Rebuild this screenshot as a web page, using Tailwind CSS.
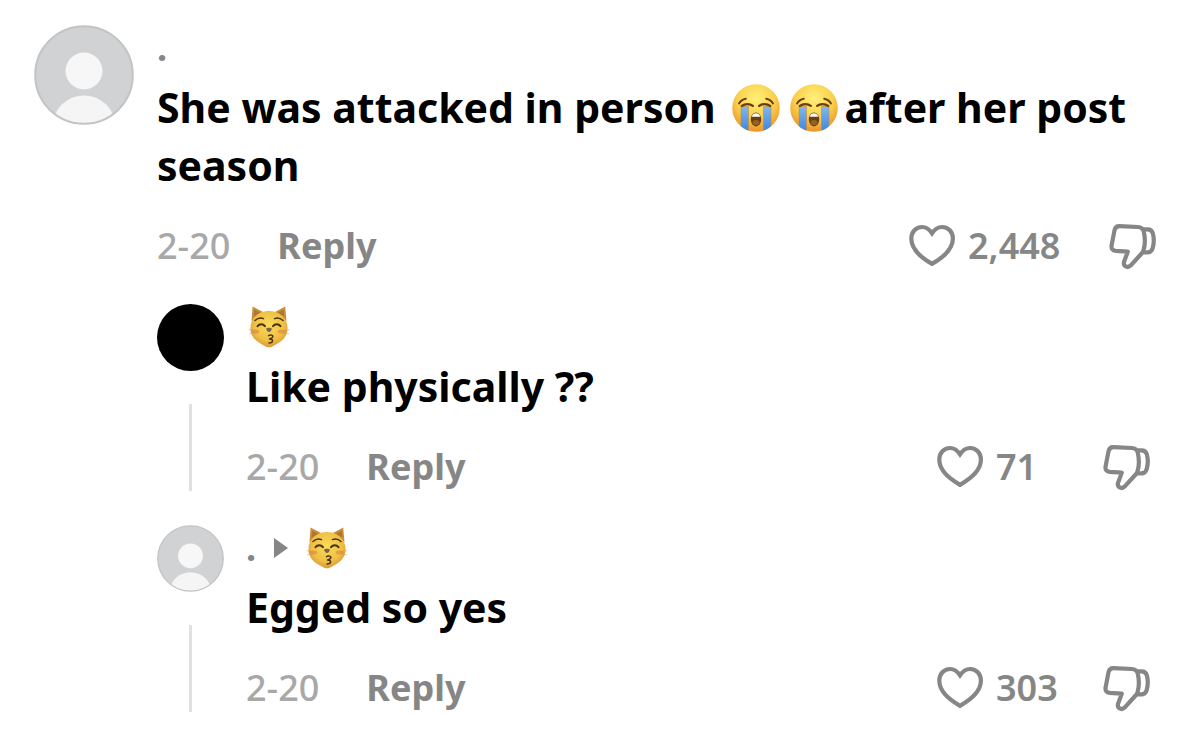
<!DOCTYPE html>
<html lang="en">
<head>
    <meta charset="UTF-8">
    <meta name="viewport" content="width=device-width, initial-scale=1.0">
    <title>Comments</title>
    <script src="https://cdn.jsdelivr.net/npm/@tailwindcss/browser@4"></script>
</head>
<body class="bg-white font-['Noto_Sans',sans-serif] text-black">
    <!-- Shared icons -->
    <svg class="absolute size-0" aria-hidden="true">
        <defs>
            <radialGradient id="face" cx="50%" cy="30%" r="72%">
                <stop offset="0" stop-color="#fff07a"/>
                <stop offset="0.55" stop-color="#fad04c"/>
                <stop offset="1" stop-color="#e88f2a"/>
            </radialGradient>
            <linearGradient id="tear" x1="0" y1="0" x2="0" y2="1">
                <stop offset="0" stop-color="#80b8ef"/>
                <stop offset="1" stop-color="#3f86e0"/>
            </linearGradient>
            <radialGradient id="fur" cx="50%" cy="40%" r="62%">
                <stop offset="0" stop-color="#f8dc5a"/>
                <stop offset="0.65" stop-color="#efc044"/>
                <stop offset="1" stop-color="#d89636"/>
            </radialGradient>
            <clipPath id="round"><circle cx="50" cy="50" r="49"/></clipPath>
            <clipPath id="head"><circle cx="24" cy="24" r="23.8"/></clipPath>
        </defs>
        <symbol id="avatar" viewBox="0 0 100 100">
            <g clip-path="url(#round)">
                <circle cx="50" cy="50" r="50" fill="#d0d2d4"/>
                <circle cx="50" cy="46" r="18.5" fill="#f7f7f7"/>
                <ellipse cx="50" cy="100" rx="31" ry="29.5" fill="#f5f5f5"/>
            </g>
            <circle cx="50" cy="50" r="48.8" fill="none" stroke="#c3c4c5" stroke-width="2"/>
        </symbol>
        <symbol id="heart" viewBox="0 0 48 48">
            <path fill="none" stroke="#868686" stroke-width="4.2" d="M24 11.3C21.400 7.400 18 5 14 5C8 5 3.300 9.800 3.300 16.600C3.300 27.500 14.500 36.500 24 41.800C33.500 36.500 44.900 27.500 44.900 16.600C44.900 9.800 40.200 5 34.200 5C30.200 5 26.600 7.400 24 11.3Z"/>
        </symbol>
        <symbol id="dislike" viewBox="0 0 48 48">
            <g fill="none" stroke="#868686" stroke-width="4.2" stroke-linejoin="round" stroke-linecap="round">
                <path d="M11.5 4.2L30 5C33.6 5.2 35 6.6 35.8 9.8C37.2 16 37.2 22.5 35.6 28C35.2 29.4 34.6 30.4 33.6 31.5L22.6 43.6C19.5 46.6 15 44.2 16 40L19.8 29.6L7.800 28.900C4.600 28.600 3 26.400 3.600 23.300L6.500 8.400C7.100 5.500 8.600 4.100 11.500 4.200Z"/>
                <path d="M36 7.3H39.6C42.6 7.3 44.2 8.8 44.9 11.6C46.2 16.8 46 21.8 44.6 26.4C43.8 29.2 42.4 30.4 39.4 30.4H35.5"/>
            </g>
        </symbol>
        <symbol id="sob" viewBox="0 0 48 48">
            <circle cx="24" cy="24" r="23.8" fill="url(#face)"/>
            <g clip-path="url(#head)">
                <path fill="url(#tear)" stroke="#c58a34" stroke-width="0.6" d="M9 22.5H16.5V47H9ZM31.5 22.5H39V47H31.5Z"/>
            </g>
            <path fill="none" stroke="#6b3d12" stroke-width="1.9" stroke-linecap="round" d="M7 19.5C8.4 17 10.8 15.2 13.8 14.7M41 19.5C39.6 17 37.2 15.2 34.2 14.7"/>
            <path fill="none" stroke="#6b3d12" stroke-width="2.3" stroke-linecap="round" d="M9.8 21.9C13 19.4 18 19.4 20.8 21.9M27.2 21.9C30 19.4 35 19.4 38.2 21.9"/>
            <ellipse cx="24" cy="35.4" rx="5.2" ry="7" fill="#6b3d12"/>
            <path fill="#fff" d="M19.8 32.800C20.400 30 22 29.200 24 29.200S27.600 30 28.200 32.800Z"/>
            <ellipse cx="24" cy="38.6" rx="3.4" ry="2.6" fill="#96601f"/>
        </symbol>
        <symbol id="cat" viewBox="0 0 42 42">
            <path fill="#c98f33" d="M3.5 15L4.6 0.6L16 6.5ZM38.5 15L37.2 0.6L26 6.5Z"/>
            <path fill="#a9763c" d="M5.8 10.5L6.3 3.8L12.5 7ZM36.2 10.5L35.7 3.8L29.5 7Z"/>
            <path fill="url(#fur)" d="M21 5C31 5 39.6 11.6 39.6 22.4C39.6 32 31.6 36.4 27 39C24.6 40.5 23 41.3 21 41.3S17.400 40.5 15 39C10.400 36.400 2.400 32 2.400 22.400C2.400 11.600 11 5 21 5Z"/>
            <ellipse cx="7" cy="25.5" rx="4.200" ry="2" fill="#e08048" fill-opacity="0.6"/>
            <ellipse cx="34" cy="25.5" rx="4.200" ry="2" fill="#e08048" fill-opacity="0.6"/>
            <path stroke="#c49a5c" stroke-width="0.5" d="M0.600 23.500L7 25M1 28L7 26.800M41.400 23.500L35 25M41 28L35 26.800"/>
            <g fill="none" stroke="#4d3210" stroke-linecap="round">
                <path stroke-width="1.5" d="M7 14.500C9.500 12.200 12.500 11.600 15.500 12.600M26.500 12.600C29.500 11.600 32.500 12.200 35 14.500"/>
                <path stroke-width="2" d="M9.500 20.200C11.500 17.600 15 17.600 17 20.200M25 20.200C27 17.600 30.500 17.600 32.500 20.200"/>
                <path stroke-width="1.5" stroke-linejoin="round" d="M20.500 29.600C22.500 28.600 25.200 29 24.900 30.600C24.700 32 22.500 32.500 21.500 33C23.500 33 25 33.800 24.500 35.300C24 36.800 22.500 37 21 37"/>
            </g>
            <path fill="#7b6350" d="M18.200 22.800C18.400 21.400 23.600 21.400 23.800 22.800C23.800 24.500 22.200 26 21 26S18.200 24.500 18.200 22.800Z"/>
        </symbol>
    </svg>

    <main class="pt-[25px] pr-[44px] pb-4 pl-[34px]">
        <article class="flex gap-[23px]">
            <svg class="size-[100px] shrink-0" role="img" aria-label="Profile picture"><use href="#avatar"/></svg>
            <div class="min-w-0 flex-1">
                <div class="flex h-[46px] items-center text-4xl/[46px] text-[#868686]">
                    <a href="#" class="font-bold">.</a>
                </div>
                <p class="mt-[7px] text-[41px]/[58px] font-bold">She was attacked in person <svg class="mr-2.5 ml-1.5 inline size-12 align-[-9px]" role="img" aria-label="Loudly crying face"><use href="#sob"/></svg><svg class="mr-1.5 inline size-12 align-[-9px]" role="img" aria-label="Loudly crying face"><use href="#sob"/></svg>after her post season</p>
                <div class="mt-7 flex h-12 items-center text-4xl/[48px]">
                    <time class="font-medium text-[#a8a8a8]">2-20</time>
                    <button type="button" class="ml-[47px] font-bold text-[#868686]">Reply</button>
                    <button type="button" class="ml-auto flex items-center gap-3 font-semibold text-[#868686]" aria-label="Like, 2,448">
                        <svg class="size-12"><use href="#heart"/></svg>
                        <span class="min-w-24 text-left">2,448</span>
                    </button>
                    <button type="button" class="ml-11" aria-label="Dislike"><svg class="size-12"><use href="#dislike"/></svg></button>
                </div>

                <!-- Replies -->
                <div class="mt-[34px] flex flex-col gap-[34px] pr-1.5">
                    <article class="flex gap-[22px]">
                        <div class="flex shrink-0 flex-col items-center">
                            <div class="size-[67px] rounded-full bg-black" role="img" aria-label="Profile picture"></div>
                            <div class="mt-[33px] w-[3px] flex-1 bg-[#e0e0e0]"></div>
                        </div>
                        <div class="min-w-0 flex-1">
                            <div class="flex h-[46px] items-center">
                                <a href="#"><svg class="ml-0.5 size-[42px]" role="img" aria-label="Kissing cat"><use href="#cat"/></svg></a>
                            </div>
                            <p class="mt-[7px] text-[41px]/[58px] font-bold">Like physically ??</p>
                            <div class="mt-7 flex h-12 items-center text-4xl/[48px]">
                                <time class="font-medium text-[#a8a8a8]">2-20</time>
                                <button type="button" class="ml-[47px] font-bold text-[#868686]">Reply</button>
                                <button type="button" class="ml-auto flex items-center gap-3 font-semibold text-[#868686]" aria-label="Like, 71">
                                    <svg class="size-12"><use href="#heart"/></svg>
                                    <span class="min-w-[62px] text-left">71</span>
                                </button>
                                <button type="button" class="ml-11" aria-label="Dislike"><svg class="size-12"><use href="#dislike"/></svg></button>
                            </div>
                        </div>
                    </article>

                    <article class="flex gap-[22px]">
                        <div class="flex shrink-0 flex-col items-center">
                            <svg class="size-[67px]" role="img" aria-label="Profile picture"><use href="#avatar"/></svg>
                            <div class="mt-[33px] w-[3px] flex-1 bg-[#e0e0e0]"></div>
                        </div>
                        <div class="min-w-0 flex-1">
                            <div class="flex h-[46px] items-center text-4xl/[46px] text-[#868686]">
                                <a href="#" class="font-bold">.</a>
                                <svg class="mx-[18px] h-5 w-3.5" viewBox="0 0 14 20" aria-hidden="true"><path fill="#868686" d="M0 0L14 10L0 20Z"/></svg>
                                <a href="#"><svg class="size-[42px]" role="img" aria-label="Kissing cat"><use href="#cat"/></svg></a>
                            </div>
                            <p class="mt-[7px] text-[41px]/[58px] font-bold">Egged so yes</p>
                            <div class="mt-7 flex h-12 items-center text-4xl/[48px]">
                                <time class="font-medium text-[#a8a8a8]">2-20</time>
                                <button type="button" class="ml-[47px] font-bold text-[#868686]">Reply</button>
                                <button type="button" class="ml-auto flex items-center gap-3 font-semibold text-[#868686]" aria-label="Like, 303">
                                    <svg class="size-12"><use href="#heart"/></svg>
                                    <span class="min-w-[62px] text-left">303</span>
                                </button>
                                <button type="button" class="ml-11" aria-label="Dislike"><svg class="size-12"><use href="#dislike"/></svg></button>
                            </div>
                        </div>
                    </article>
                </div>
            </div>
        </article>
    </main>
</body>
</html>
